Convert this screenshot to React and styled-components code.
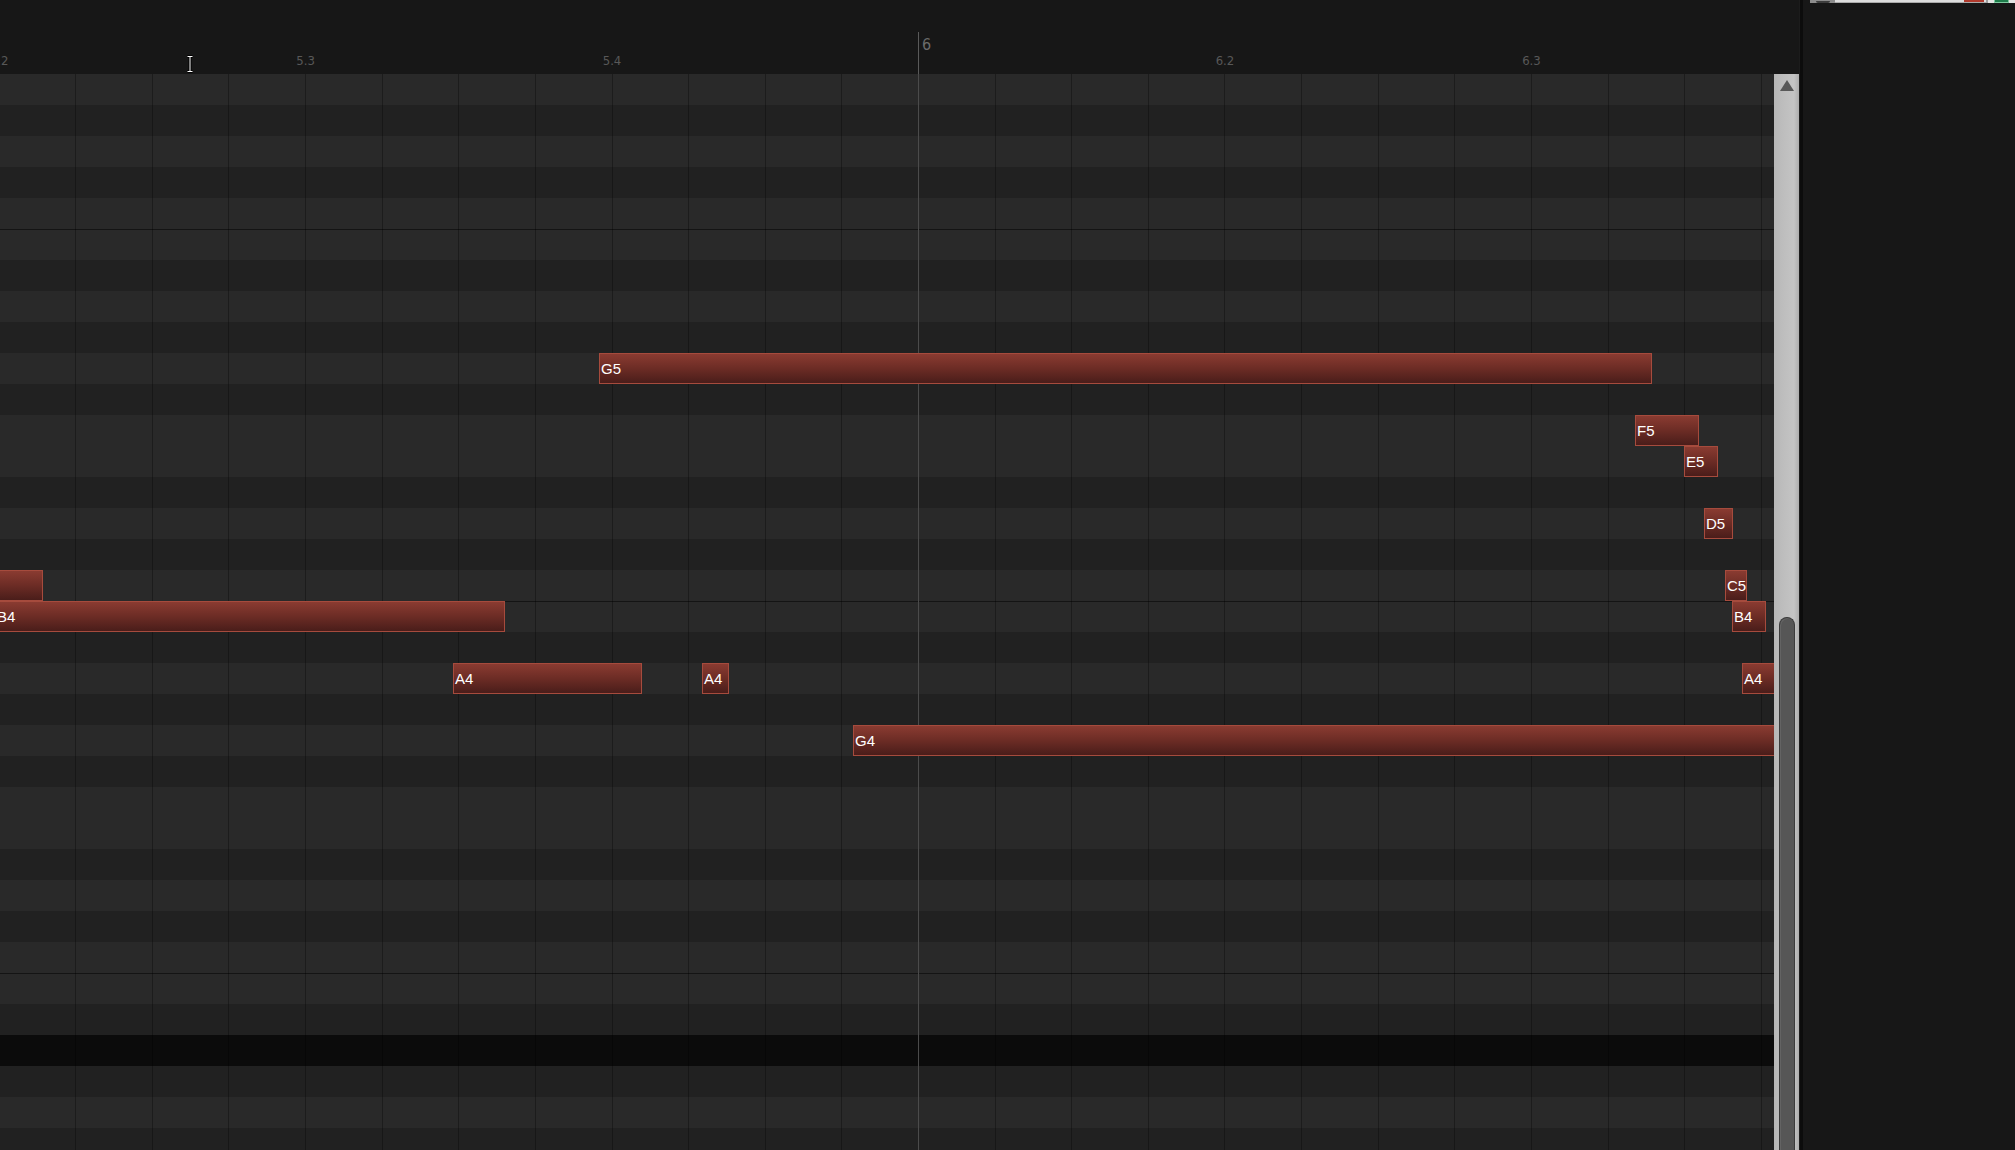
import React from 'react';
import styled, { createGlobalStyle } from 'styled-components';

const GlobalStyle = createGlobalStyle`
  html, body {
    margin: 0;
    padding: 0;
    background: #171717;
    overflow: hidden;
  }
  body {
    font-family: "Liberation Sans", Arial, sans-serif;
  }
  #root {
    width: 2015px;
    height: 1150px;
  }
`;

const ROW_H = 31;
const RULER_H = 74;
const BAR_X = 918;
const STEP = 76.62;
const NAMES = ['E', 'D#', 'D', 'C#', 'C', 'B', 'A#', 'A', 'G#', 'G', 'F#', 'F'];

const rows = Array.from({ length: 35 }, (_, i) => {
  const name = NAMES[i % 12];
  return {
    id: i,
    kind: i === 31 ? 'off' : name.includes('#') ? 'black' : 'white',
    octaveTop: name === 'B' && i > 0,
  };
});

const notes = [
  { label: '', row: 16, x: -140, x2: 42.5 },
  { label: 'B4', row: 17, x: -5, x2: 504.5 },
  { label: 'G5', row: 9, x: 599, x2: 1651.5 },
  { label: 'A4', row: 19, x: 453, x2: 641.5 },
  { label: 'A4', row: 19, x: 701.5, x2: 728.6 },
  { label: 'G4', row: 21, x: 853, x2: 1900 },
  { label: 'F5', row: 11, x: 1635, x2: 1699 },
  { label: 'E5', row: 12, x: 1684, x2: 1718 },
  { label: 'D5', row: 14, x: 1704, x2: 1733 },
  { label: 'C5', row: 16, x: 1725, x2: 1747 },
  { label: 'B4', row: 17, x: 1732, x2: 1766 },
  { label: 'A4', row: 19, x: 1742, x2: 1800 },
];

const rulerMarks = [
  { k: -12, text: '5.2' },
  { k: -8, text: '5.3' },
  { k: -4, text: '5.4' },
  { k: 4, text: '6.2' },
  { k: 8, text: '6.3' },
];

const gridKs = Array.from({ length: 24 }, (_, i) => i - 12).filter((k) => k !== 0);

const Shell = styled.div`
  display: flex;
  width: 2015px;
  height: 1150px;
  overflow: hidden;
  background: #171717;
`;

const Editor = styled.div`
  display: flex;
  flex-direction: column;
  width: 1799px;
  flex: none;
  height: 100%;
`;

const Ruler = styled.div`
  position: relative;
  height: ${RULER_H}px;
  flex: none;
  background: #171717;
  overflow: hidden;
`;

const SubLabel = styled.span`
  position: absolute;
  top: 54px;
  transform: translateX(-50%);
  font-family: "DejaVu Sans Condensed", "Liberation Sans Narrow", "DejaVu Sans", sans-serif;
  font-stretch: condensed;
  font-size: 13px;
  line-height: 13px;
  color: #585858;
  white-space: nowrap;
`;

const MajorLabel = styled.span`
  position: absolute;
  top: 37px;
  font-family: "DejaVu Sans Condensed", "Liberation Sans Narrow", "DejaVu Sans", sans-serif;
  font-stretch: condensed;
  font-size: 16px;
  line-height: 16px;
  color: #6b6b6b;
`;

const BarTick = styled.div`
  position: absolute;
  top: 32px;
  bottom: 0;
  width: 1px;
  background: #5a5a5a;
`;

const Cursor = styled.svg`
  position: absolute;
  left: 186px;
  top: 55px;
`;

const Body = styled.div`
  display: flex;
  flex: 1;
  min-height: 0;
`;

const Roll = styled.div`
  position: relative;
  flex: 1;
  overflow: hidden;
  display: flex;
  flex-direction: column;
`;

const rowBg = { white: '#292929', black: '#212121', off: '#0b0b0b' };

const Row = styled.div`
  flex: none;
  height: ${ROW_H}px;
  box-sizing: border-box;
  background: ${(p) => rowBg[p.$kind]};
  border-top: ${(p) => (p.$octaveTop ? '1px solid #141414' : 'none')};
`;

const GridLine = styled.div`
  position: absolute;
  top: 0;
  bottom: 0;
  width: 1px;
  background: rgba(0, 0, 0, 0.3);
  z-index: 1;
`;

const BarLine = styled.div`
  position: absolute;
  top: 0;
  bottom: 0;
  width: 1px;
  background: #4b4b4b;
  z-index: 2;
`;

const Note = styled.div`
  position: absolute;
  z-index: 3;
  height: ${ROW_H}px;
  box-sizing: border-box;
  border: 1px solid #a64b3d;
  background: linear-gradient(to bottom, #8a3b31 0%, #6c2c25 50%, #4a1d1a 100%);
  display: flex;
  align-items: center;
  padding-left: 1px;
  overflow: hidden;
  font-family: "Liberation Sans", Arial, sans-serif;
  font-size: 15px;
  color: #ffffff;
  white-space: nowrap;
`;

const Scrollbar = styled.div`
  width: 25px;
  flex: none;
  background: linear-gradient(to right, #b7b7b7 0%, #bebebe 40%, #c4c4c4 80%, #adadad 100%);
  display: flex;
  flex-direction: column;
  align-items: center;
  overflow: hidden;
`;

const ArrowButton = styled.div`
  height: 25px;
  flex: none;
  display: flex;
  justify-content: center;
  padding-top: 6px;
  box-sizing: border-box;
  width: 100%;
`;

const Thumb = styled.div`
  flex: none;
  margin-top: 518px;
  width: 16px;
  height: 600px;
  box-sizing: border-box;
  background: #565656;
  border: 1.5px solid #3b3b3b;
  border-bottom: none;
  border-radius: 8px 8px 0 0;
  box-shadow: inset 1px 1px 0 rgba(255, 255, 255, 0.08);
`;

const Divider = styled.div`
  width: 3px;
  flex: none;
  background: #0c0c0c;
  border-left: 1px solid #1c1c1c;
`;

const SidePanel = styled.div`
  flex: 1;
  background: #171717;
  display: flex;
  flex-direction: column;
`;

const TopStrip = styled.div`
  display: flex;
  height: 3px;
  margin-left: 7px;
`;

const Knob = styled.div`
  width: 25px;
  flex: none;
  background: #8d8d8d;
  display: flex;
  justify-content: center;
  align-items: flex-end;
`;

const KnobBlob = styled.div`
  width: 14px;
  height: 2px;
  background: #3d3d3d;
  border-radius: 0 0 5px 5px;
`;

const Field = styled.div`
  flex: 1;
  background: #dedede;
  box-sizing: border-box;
  border-bottom: 1px solid #ababab;
  display: flex;
  justify-content: flex-end;
  padding-right: 2px;
`;

const Meter = styled.div`
  width: 20px;
  height: 2px;
  background: ${(p) => p.$color};
`;

const Cell = styled.div`
  width: 29px;
  flex: none;
  box-sizing: border-box;
  border-left: 2px solid #9c9c9c;
  background: #e4e4e4;
  padding-left: 6px;
`;

const GreenBox = styled.div`
  width: 15px;
  height: 3px;
  box-sizing: border-box;
  background: #1f7d4c;
  border: 1px solid #7fcaa0;
  border-top: none;
`;

export default function App() {
  return (
    <>
      <GlobalStyle />
      <Shell>
        <Editor>
          <Ruler>
            {rulerMarks.map((m) => (
              <SubLabel key={m.text} style={{ left: BAR_X + STEP * m.k + 0.5 }}>
                {m.text}
              </SubLabel>
            ))}
            <BarTick style={{ left: BAR_X }} />
            <MajorLabel style={{ left: BAR_X + 4 }}>6</MajorLabel>
            <Cursor width="8" height="18" viewBox="0 0 8 18">
              <path d="M1.5 1.5h5M4 1.5v15M1.5 16.5h5" stroke="#000" strokeWidth="3" fill="none" />
              <path d="M1.5 1.5h5M4 1.5v15M1.5 16.5h5" stroke="#fff" strokeWidth="1" fill="none" />
            </Cursor>
          </Ruler>
          <Body>
            <Roll>
              {rows.map((r) => (
                <Row key={r.id} $kind={r.kind} $octaveTop={r.octaveTop} />
              ))}
              {gridKs.map((k) => (
                <GridLine key={k} style={{ left: Math.round(BAR_X + STEP * k) }} />
              ))}
              <BarLine style={{ left: BAR_X }} />
              {notes.map((n, i) => {
                const left = Math.round(n.x);
                return (
                  <Note
                    key={i}
                    style={{ left, width: Math.round(n.x2) - left, top: n.row * ROW_H }}
                  >
                    {n.label}
                  </Note>
                );
              })}
            </Roll>
            <Scrollbar>
              <ArrowButton>
                <svg width="14" height="11" viewBox="0 0 14 11">
                  <polygon points="7,0 14,11 0,11" fill="#585858" />
                </svg>
              </ArrowButton>
              <Thumb />
            </Scrollbar>
          </Body>
        </Editor>
        <Divider />
        <SidePanel>
          <TopStrip>
            <Knob>
              <KnobBlob />
            </Knob>
            <Field>
              <Meter $color="#b13a2d" />
            </Field>
            <Cell>
              <GreenBox />
            </Cell>
          </TopStrip>
        </SidePanel>
      </Shell>
    </>
  );
}
